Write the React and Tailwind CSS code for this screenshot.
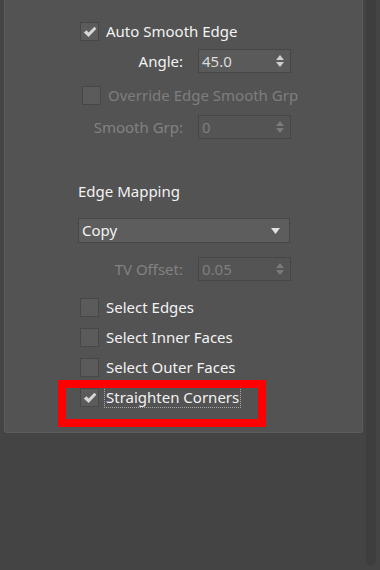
import React from 'react';

const font = { fontFamily: '"Noto Sans", "Open Sans", sans-serif' };

function Check({ on, disabled }) {
  return (
    <div className="w-[19px] h-[19px] shrink-0 bg-[#5b5b5b] border border-[#474747] flex items-center justify-center">
      {on && (
        <svg width="14" height="12" viewBox="0 0 14 12">
          <path d="M0.8 6.4 L3.6 4.2 L5.6 6.6 L11.4 0.8 L13.4 2.8 L5.6 11 Z" fill={disabled ? '#888' : '#d6d6d6'} />
        </svg>
      )}
    </div>
  );
}

function Spinner({ disabled }) {
  const c = disabled ? '#7a7a7a' : '#cfcfcf';
  return (
    <svg width="8" height="13" viewBox="0 0 8 13" className="shrink-0">
      <path d="M4 0 L8 5 L0 5 Z" fill={c} />
      <path d="M0 7 L8 7 L4 12 Z" fill={c} />
    </svg>
  );
}

function SpinRow({ label, value, disabled }) {
  const txt = disabled ? 'text-[#828282]' : 'text-[#f2f2f2]';
  return (
    <div className="flex items-center h-[24px]">
      <div className={`w-[103px] text-right ${txt}`}>{label}</div>
      <div className={`ml-[15px] w-[93px] h-[24px] flex items-center justify-between pl-[3px] pr-[6px] border border-[#464646] ${disabled ? 'bg-[#545454] text-[#7e7e7e]' : 'bg-[#5a5a5a] text-[#dcdcdc]'}`}>
        <span>{value}</span>
        <Spinner disabled={disabled} />
      </div>
    </div>
  );
}

function CheckRow({ label, on, disabled, focus }) {
  return (
    <div className="flex items-center h-[19px]">
      <Check on={on} disabled={disabled} />
      <span
        className={`ml-[5px] leading-[19px] px-[1px] ${disabled ? 'text-[#7e7e7e]' : 'text-[#f2f2f2]'} ${focus ? 'border border-dotted border-[#a8a8a8]' : 'border border-transparent'}`}
      >
        {label}
      </span>
    </div>
  );
}

export default function App() {
  return (
    <div className="w-[380px] h-[570px] bg-[#444444] flex overflow-hidden text-[15px]" style={font}>
      <div className="ml-[4px] w-[359px] h-[433px] bg-[#535353] border-x border-b border-[#5c5c5c] rounded-b-[3px] flex flex-col pt-[22px] pl-[75px]">
        <CheckRow label="Auto Smooth Edge" on />
        <div className="mt-[8px]">
          <SpinRow label="Angle:" value="45.0" />
        </div>
        <div className="mt-[13px] ml-[2px]">
          <CheckRow label="Override Edge Smooth Grp" disabled />
        </div>
        <div className="mt-[10px]">
          <SpinRow label="Smooth Grp:" value="0" disabled />
        </div>

        <div className="mt-[41px] ml-[-2px] text-[#f2f2f2] leading-[22px]">Edge Mapping</div>

        <div className="mt-[16px] ml-[-2px] w-[212px] h-[25px] bg-[#5d5d5d] border border-[#474747] flex items-center justify-between pl-[3px] pr-[9px] text-[#f2f2f2]">
          <span>Copy</span>
          <svg width="9" height="6" viewBox="0 0 9 6">
            <path d="M0 0 L9 0 L4.5 6 Z" fill="#e2e2e2" />
          </svg>
        </div>

        <div className="mt-[14px]">
          <SpinRow label="TV Offset:" value="0.05" disabled />
        </div>

        <div className="mt-[17px] flex flex-col gap-[11px]">
          <CheckRow label="Select Edges" />
          <CheckRow label="Select Inner Faces" />
          <CheckRow label="Select Outer Faces" />
          <div className="relative">
            <CheckRow label="Straighten Corners" on focus />
            <div className="absolute left-[-22px] top-[-8px] w-[208px] h-[47px] border-[8px] border-[#ff0000]" />
          </div>
        </div>
      </div>
      <div className="ml-[3px] w-[10px] h-[566px] bg-[#3e3e3e] rounded-b-[5px]" />
    </div>
  );
}
